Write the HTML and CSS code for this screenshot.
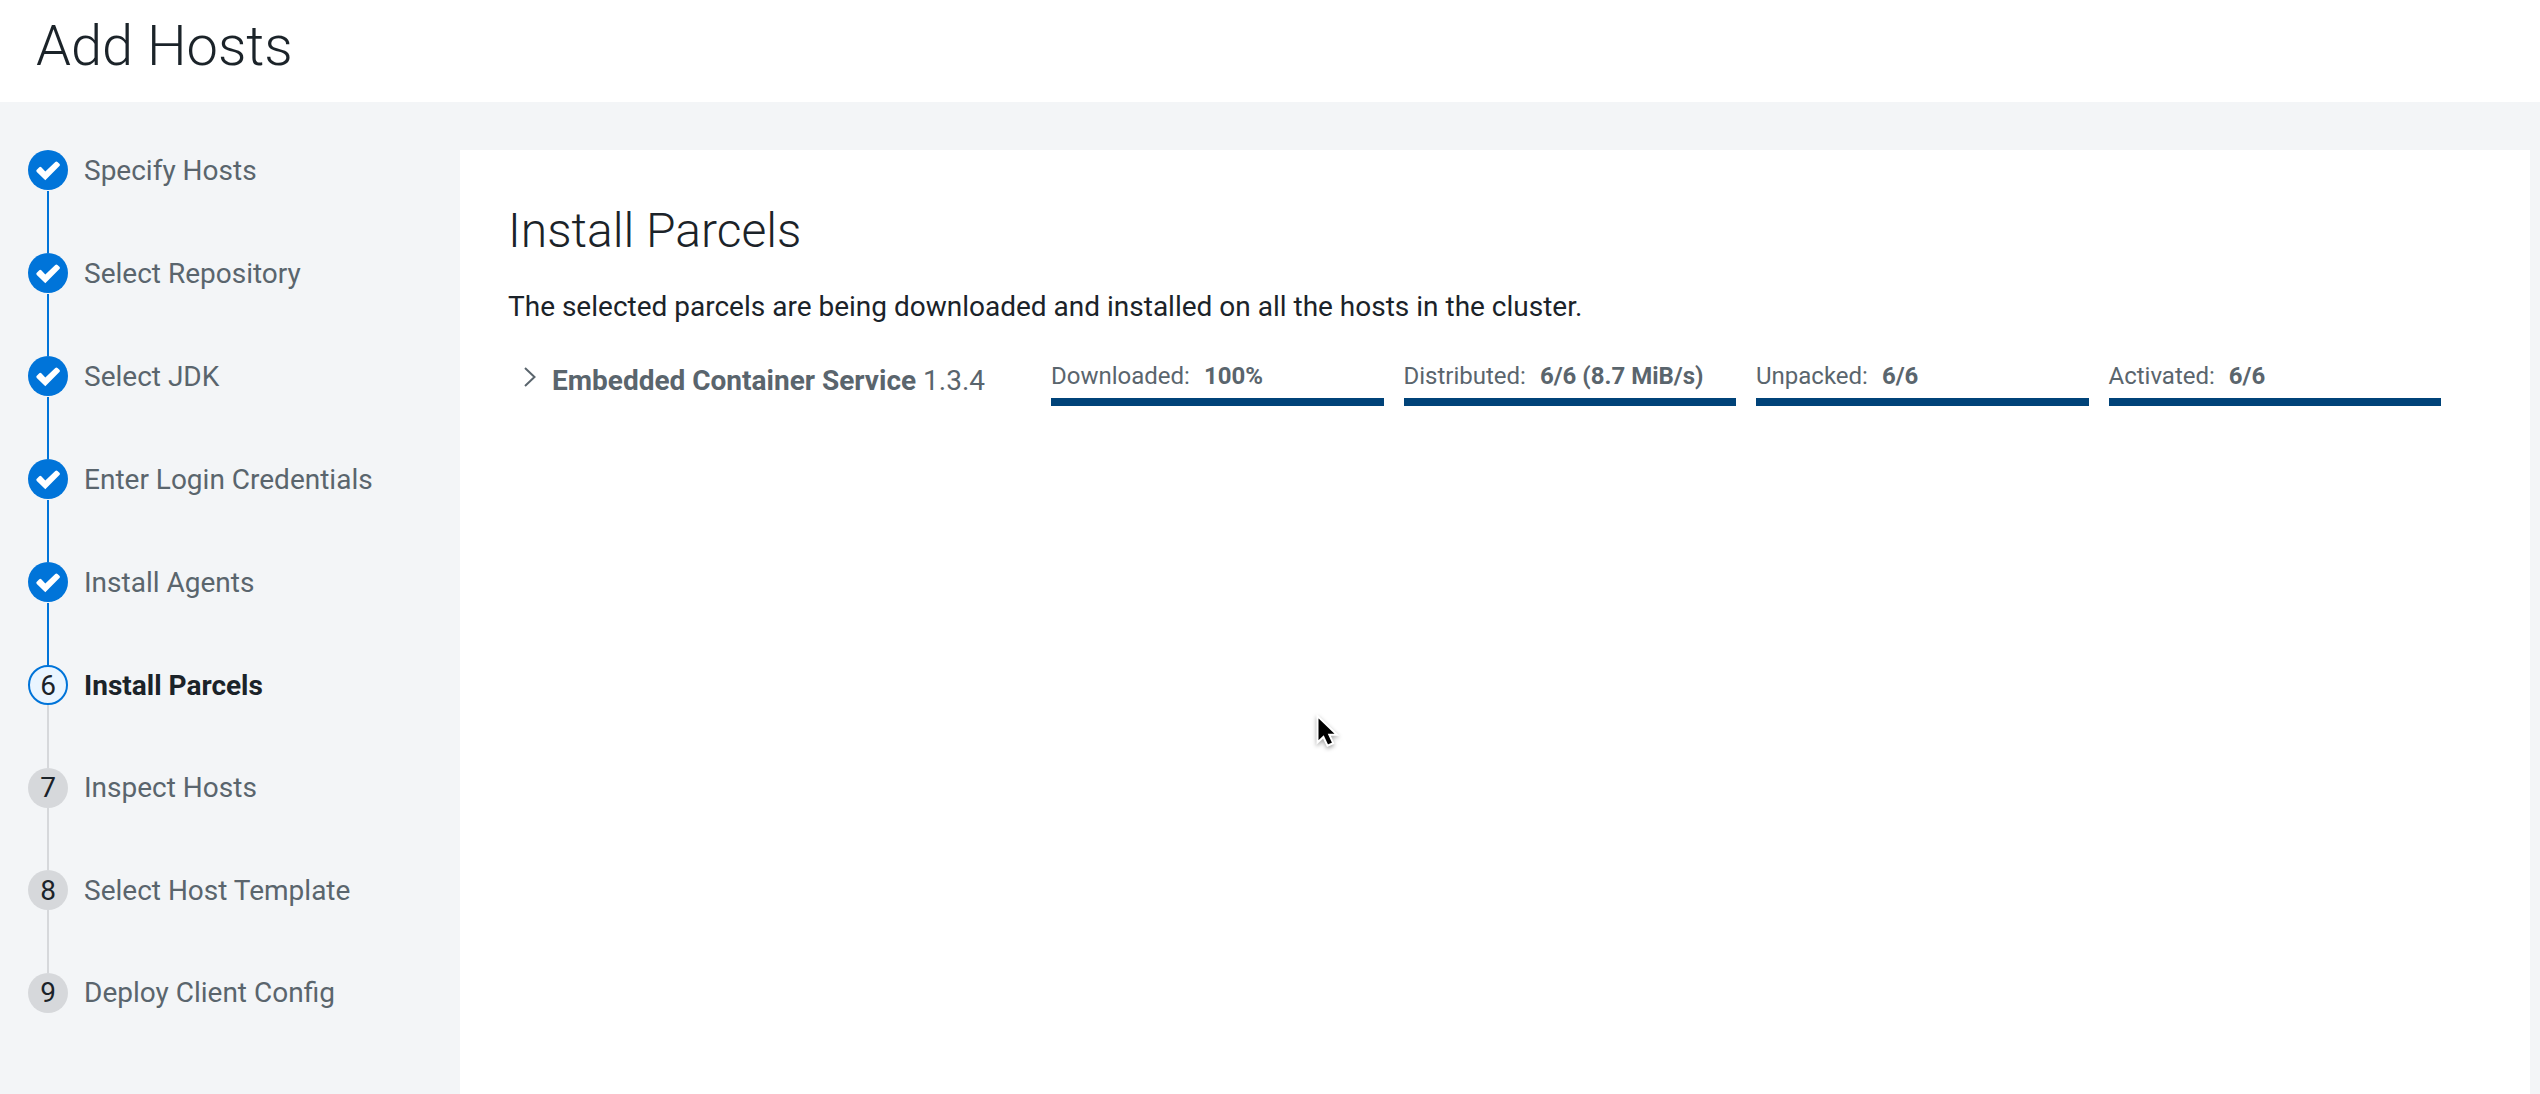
FILE: index.html
```html
<!DOCTYPE html>
<html lang="en">
<head>
<meta charset="utf-8">
<title>Add Hosts</title>
<link rel="stylesheet" href="styles.css">
</head>
<body>
<svg class="sprite" aria-hidden="true">
  <symbol id="check" viewBox="0 0 24 20"><path d="M9.3 19.2.8 10.9Q-.2 9.8.8 8.7L3.3 6.3Q4.3 5.3 5.3 6.3L9.3 10.6 19.3.9Q20.4-.1 21.5.9L23.4 2.8Q24.4 3.9 23.4 5Z" fill="#fff"/></symbol>
</svg>
<header class="header"><h1 class="header-title">Add Hosts</h1></header>
<div class="wizard">
  <ol class="steps">
    <li class="step done"><span class="marker"><svg class="check"><use href="#check"/></svg></span><span class="label">Specify Hosts</span></li>
    <li class="step done"><span class="marker"><svg class="check"><use href="#check"/></svg></span><span class="label">Select Repository</span></li>
    <li class="step done"><span class="marker"><svg class="check"><use href="#check"/></svg></span><span class="label">Select JDK</span></li>
    <li class="step done"><span class="marker"><svg class="check"><use href="#check"/></svg></span><span class="label">Enter Login Credentials</span></li>
    <li class="step done"><span class="marker"><svg class="check"><use href="#check"/></svg></span><span class="label">Install Agents</span></li>
    <li class="step current"><span class="marker">6</span><span class="label">Install Parcels</span></li>
    <li class="step"><span class="marker">7</span><span class="label">Inspect Hosts</span></li>
    <li class="step"><span class="marker">8</span><span class="label">Select Host Template</span></li>
    <li class="step"><span class="marker">9</span><span class="label">Deploy Client Config</span></li>
  </ol>
  <main class="panel">
    <h2 class="title">Install Parcels</h2>
    <p class="intro">The selected parcels are being downloaded and installed on all the hosts in the cluster.</p>
    <div class="parcel">
      <svg class="chevron" viewBox="0 0 12 20"><path d="M1 1 10.5 10 1 19" fill="none" stroke="currentColor" stroke-width="2"/></svg>
      <div class="parcel-name"><strong>Embedded Container Service</strong> 1.3.4</div>
      <div class="stages">
        <div class="stage"><div class="stage-text">Downloaded: <strong>100%</strong></div><div class="bar"></div></div>
        <div class="stage"><div class="stage-text">Distributed: <strong>6/6 (8.7 MiB/s)</strong></div><div class="bar"></div></div>
        <div class="stage"><div class="stage-text">Unpacked: <strong>6/6</strong></div><div class="bar"></div></div>
        <div class="stage"><div class="stage-text">Activated: <strong>6/6</strong></div><div class="bar"></div></div>
      </div>
    </div>
  </main>
</div>
<svg class="pointer" viewBox="0 0 24 34"><path d="M1.5 2V28.5L7.4 23 11.5 31.7 17.2 29.2 13.3 20.8H21Z" fill="#000" stroke="#fff" stroke-width="2"/></svg>
</body>
</html>
```
FILE: styles.css
```css
* { box-sizing: border-box; }
body {
  margin: 0;
  height: 1094px;
  display: flex;
  flex-direction: column;
  overflow: hidden;
  background: #f3f5f7;
  color: #1b2329;
  font-family: Roboto, sans-serif;
  font-size: 28px;
  line-height: 40px;
}
h1, h2, p, ol { margin: 0; padding: 0; }
.sprite { display: none; }

.header { height: 102px; padding: 10px 36px 0; background: #fff; }
.header-title { font-size: 56px; line-height: 72px; font-weight: 300; }

.wizard { flex: 1; display: flex; padding: 48px 10px 0 28px; }
.steps { width: 432px; list-style: none; }
.step {
  position: relative;
  display: flex;
  gap: 16px;
  height: 103px;
  color: #5a656d;
}
.step:nth-child(7) { height: 102px; }
.step:not(:last-child)::after {
  content: "";
  position: absolute;
  left: 19px;
  top: 40px;
  bottom: 0;
  width: 2px;
  background: #d6d8db;
}
.step.done::after { top: 41px; background: #0074d9; }
.marker {
  display: flex;
  align-items: center;
  justify-content: center;
  width: 40px;
  height: 40px;
  border-radius: 50%;
  background: #d6d8db;
  color: #1b2329;
}
.label { padding-top: 1px; }
.step:nth-child(7) .label,
.step:nth-child(9) .label { padding-top: 0; }
.step:nth-child(8) .marker { padding-top: 2px; }
.done .marker { padding-top: 1px; background: #0074d9; }
.current .marker { padding-top: 2px; background: #eaf5ff; border: 2px solid #0074d9; }
.current .label { color: #1b2329; font-weight: 700; }
.check { width: 24px; height: 20px; }

.panel { flex: 1; background: #fff; padding: 49px 48px 0; }
.title { font-size: 48px; line-height: 64px; font-weight: 300; }
.intro { margin-top: 24px; }
.parcel {
  display: flex;
  align-items: flex-start;
  margin-top: 31px;
  padding: 0 41px 0 16px;
  color: #5a656d;
}
.chevron { width: 12px; height: 20px; margin: 9px 16px 0 0; }
.parcel-name { width: 499px; padding-top: 3px; }
.stages { flex: 1; display: grid; grid-template-columns: repeat(4, 1fr); gap: 20px; }
.stage-text { font-size: 24px; line-height: 34px; padding-top: 1px; white-space: nowrap; }
.stage-text strong { margin-left: 8px; }
.bar { height: 8px; margin-top: 5px; background: #004379; }

.pointer {
  position: absolute;
  left: 1316px;
  top: 714px;
  width: 24px;
  height: 34px;
  filter: drop-shadow(0 2px 2px rgba(0, 0, 0, .35));
}
```
